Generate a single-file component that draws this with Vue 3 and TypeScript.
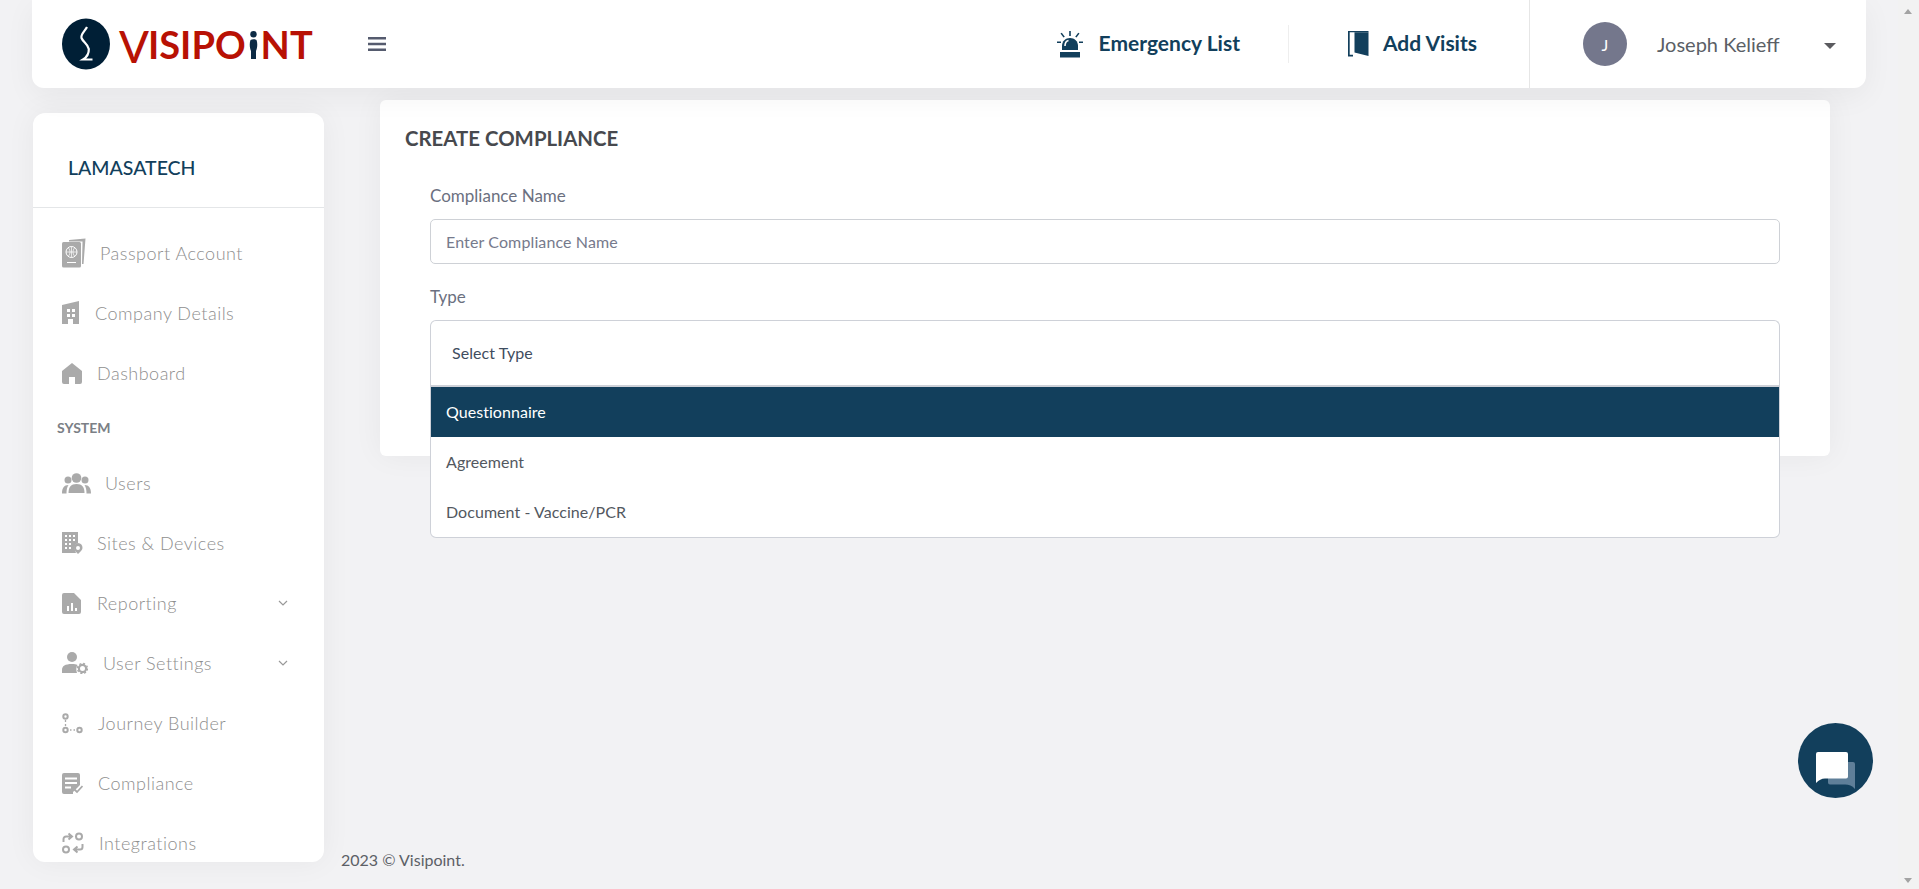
<script setup lang="ts">
interface NavItem { label: string; icon: string; w: number; chevron?: boolean; section?: boolean }
const items: NavItem[] = [
  { label: 'Passport Account', icon: 'passport', w: 38 },
  { label: 'Company Details', icon: 'company', w: 33 },
  { label: 'Dashboard', icon: 'home', w: 35 },
  { label: 'SYSTEM', icon: '', w: 0, section: true },
  { label: 'Users', icon: 'users', w: 43 },
  { label: 'Sites & Devices', icon: 'sites', w: 35 },
  { label: 'Reporting', icon: 'report', w: 35, chevron: true },
  { label: 'User Settings', icon: 'usercog', w: 41, chevron: true },
  { label: 'Journey Builder', icon: 'journey', w: 36 },
  { label: 'Compliance', icon: 'compliance', w: 36 },
  { label: 'Integrations', icon: 'integrations', w: 37 }
]
const options = ['Questionnaire', 'Agreement', 'Document - Vaccine/PCR']
</script>

<template>
  <div class="page">
    <div class="content">
      <header class="topbar">
        <div class="logo">
          <svg class="logo-mark" width="48" height="52" viewBox="0 0 48 52">
            <ellipse cx="24" cy="26" rx="24" ry="25.5" fill="#001f36" />
            <path d="M25 9 C23 13 18.500 16 19.500 20 C21 24 26 26 26.800 31 C27 35 25 39 21 41.500 L30.500 41.500" fill="none" stroke="#fff" stroke-width="2.200" />
          </svg>
          <span class="logo-text"><span class="logo-v">V</span>ISIPO<span class="logo-i"><svg width="9" height="29" viewBox="0 0 9 29"><circle cx="4.500" cy="3.200" r="3.200" fill="#0c2a44" /><path d="M1.500 9 C3 8 6 8 7.500 9 C9 13 8 18 7 20 L7 28 L2 28 L2 20 C1 18 0 13 1.500 9 Z" fill="#0c2a44" /></svg></span>NT</span>
        </div>
        <svg class="burger" width="18" height="16" viewBox="0 0 18 16"><path d="M0 1h18v2.600H0zM0 6.700h18v2.600H0zM0 12.400h18V15H0z" fill="#555b6e" /></svg>
        <div class="top-actions">
          <a class="action emergency">
            <svg width="26" height="27" viewBox="0 0 26 27" fill="#123f5c">
              <path d="M5 19 V15 C5 10 8.500 7 13 7 C17.500 7 21 10 21 15 V19 Z" />
              <rect x="3" y="21" width="20" height="5.500" />
              <path d="M12.200 0h1.600v5h-1.600zM3.500 2.600l1.300-.9 3 4-1.300.9zM22.500 2.600l-1.300-.9-3 4 1.300.9zM0 10.500h4v1.500H0zM22 10.500h4v1.500h-4z" />
              <path d="M11.500 9.500 C9.500 10 8 12 8 15" stroke="#fff" stroke-width="1.600" fill="none" />
            </svg>
            <span>Emergency List</span>
          </a>
          <span class="vline"></span>
          <a class="action visits">
            <svg width="21" height="26" viewBox="0 0 21 26" fill="#123f5c">
              <path d="M0 0H20.500V1.200H1.700V23.800H5V25.500H0Z" />
              <path d="M6.500 1.200H20.500V25L6.500 21.500Z" />
            </svg>
            <span>Add Visits</span>
          </a>
        </div>
        <div class="user">
          <span class="avatar">J</span>
          <span class="user-name">Joseph Kelieff</span>
          <span class="caret"></span>
        </div>
      </header>

      <div class="body">
        <aside class="sidebar">
          <div class="org">LAMASATECH</div>
          <nav class="nav">
            <template v-for="item in items" :key="item.label">
              <div v-if="item.section" class="section">{{ item.label }}</div>
              <a v-else class="nav-item">
                <span class="nav-icon" :style="{ width: item.w + 'px' }">
                  <svg v-if="item.icon === 'passport'" width="24" height="30" viewBox="0 0 24 30" fill="#aaa">
                    <path d="M7 2 L23.500 0.500 L21.500 26 L20 26 L20.500 3.500 L7 3.500z" />
                    <rect x="0" y="4" width="19" height="25.500" rx="1.500" />
                    <circle cx="9.500" cy="14" r="5.500" fill="none" stroke="#fff" stroke-width="1" />
                    <path d="M4 14h11M9.500 8.500v11M6.500 10c2 2.500 2 5.500 0 8M12.500 10c-2 2.500-2 5.500 0 8" fill="none" stroke="#fff" stroke-width=".7" />
                    <rect x="5" y="24" width="9" height="1" fill="#fff" />
                  </svg>
                  <svg v-else-if="item.icon === 'company'" width="18" height="24" viewBox="0 0 18 24" fill="#aaa">
                    <path fill-rule="evenodd" d="M0 4 L17 0 V23 H11 V18 H6 V23 H0 Z M5 8h3v3H5z M10 8h3v3h-3z M5 13h3v3H5z M10 13h3v3h-3z" />
                  </svg>
                  <svg v-else-if="item.icon === 'home'" width="20" height="21" viewBox="0 0 20 21" fill="#aaa">
                    <path d="M10 0 L20 8 V19 A2 2 0 0 1 18 21 H13 V14 H7 V21 H2 A2 2 0 0 1 0 19 V8 Z" />
                  </svg>
                  <svg v-else-if="item.icon === 'users'" width="29" height="21" viewBox="0 0 29 21" fill="#aaa">
                    <circle cx="14.500" cy="5" r="4.800" /><circle cx="6" cy="7" r="3.500" /><circle cx="23" cy="7" r="3.500" />
                    <path d="M6.500 20 C6.500 14 9 11 14.500 11 C20 11 22.500 14 22.500 20 Z" />
                    <path d="M0 20.500 C0 15 2 12 6.500 12 C5 14 4.500 17 4.500 20.500Z M29 20.500 C29 15 27 12 22.500 12 C24 14 24.500 17 24.500 20.500Z" />
                  </svg>
                  <svg v-else-if="item.icon === 'sites'" width="21" height="22" viewBox="0 0 21 22" fill="#aaa">
                    <path fill-rule="evenodd" d="M0 0H16V11 C13 12 12 15 13 18 L14 21H0Z M3 3h2v2H3z M7 3h2v2H7z M11 3h2v2h-2z M3 7h2v2H3z M7 7h2v2H7z M11 7h2v2h-2z M3 11h2v2H3z M7 11h2v2H7z M3 15h2v2H3z M7 15h2v2H7z" />
                    <path fill-rule="evenodd" d="M16 11 A5 5 0 0 1 20.500 16 C20.500 18 18 20 16 22 C14 20 12 18 12 16 A4.500 4.500 0 0 1 16 11 Z M16 14 A2 2 0 1 0 16 18 A2 2 0 1 0 16 14 Z" />
                  </svg>
                  <svg v-else-if="item.icon === 'report'" width="19" height="21" viewBox="0 0 19 21" fill="#aaa">
                    <path fill-rule="evenodd" d="M2 0H12L19 7V19A2 2 0 0 1 17 21H2A2 2 0 0 1 0 19V2A2 2 0 0 1 2 0Z M5 13v5h2v-5z M9 10v8h2v-8z M13 15v3h2v-3z" />
                  </svg>
                  <svg v-else-if="item.icon === 'usercog'" width="26" height="22" viewBox="0 0 26 22" fill="#aaa">
                    <circle cx="10" cy="5" r="5" />
                    <path d="M0 21 V18 C0 14 3 12 10 12 C12.500 12 14 12.300 15.500 13 C14 15 14 18 15 21Z" />
                    <circle cx="20.500" cy="16.500" r="3.600" fill="none" stroke="#aaa" stroke-width="2.200" />
                    <circle cx="20.500" cy="16.500" r="5" fill="none" stroke="#aaa" stroke-width="1.400" stroke-dasharray="2 1.930" />
                  </svg>
                  <svg v-else-if="item.icon === 'journey'" width="21" height="21" viewBox="0 0 21 21" fill="none" stroke="#aaa" stroke-width="2">
                    <circle cx="3.500" cy="3.500" r="2.200" /><circle cx="3.500" cy="17" r="2.200" /><circle cx="17.500" cy="17" r="2.200" />
                    <path d="M3.500 7v2M3.500 11v2M8 17h1.500M11.500 17H13" stroke-width="1.300" />
                  </svg>
                  <svg v-else-if="item.icon === 'compliance'" width="21" height="21" viewBox="0 0 21 21" fill="#aaa">
                    <path fill-rule="evenodd" d="M2 0H16A2 2 0 0 1 18 2V12 L11 19 V21H2A2 2 0 0 1 0 19V2A2 2 0 0 1 2 0Z M3 4.500v2h12v-2z M3 9v2h12V9z M3 13.500v2h6v-2z" />
                    <path d="M12 16l3 3 5.500-6" fill="none" stroke="#aaa" stroke-width="1.800" />
                  </svg>
                  <svg v-else-if="item.icon === 'integrations'" width="22" height="22" viewBox="0 0 22 22" fill="none" stroke="#aaa" stroke-width="2">
                    <circle cx="17" cy="4.500" r="3" /><circle cx="4" cy="17.500" r="3" />
                    <path d="M1.500 10V7A2.500 2.500 0 0 1 4 4.500H9M6.500 1.500 10 4.500 6.500 7.500" />
                    <path d="M20.500 12V15A2.500 2.500 0 0 1 18 17.500H13M15.500 14.500 12 17.500 15.500 20.500" />
                  </svg>
                </span>
                <span class="nav-label">{{ item.label }}</span>
                <svg v-if="item.chevron" class="chev" width="10" height="6" viewBox="0 0 10 6"><path d="M1 1l4 4 4-4" fill="none" stroke="#999" stroke-width="1.200" /></svg>
              </a>
            </template>
          </nav>
        </aside>

        <main class="main">
          <section class="card">
            <h1 class="card-title">CREATE COMPLIANCE</h1>
            <div class="form">
              <label class="label">Compliance Name</label>
              <input class="input" type="text" placeholder="Enter Compliance Name" />
              <label class="label type-label">Type</label>
              <div class="select">
                <div class="select-head">Select Type</div>
                <ul class="menu">
                  <li v-for="(o, i) in options" :key="o" class="option" :class="{ active: i === 0 }">{{ o }}</li>
                </ul>
              </div>
            </div>
          </section>
          <footer class="footer">2023 © Visipoint.</footer>
        </main>
      </div>
    </div>

    <div class="scrollbar">
      <span class="arrow up"></span>
      <span class="arrow down"></span>
    </div>

    <button class="chat" type="button" aria-label="Chat">
      <svg width="39" height="37" viewBox="0 0 39 37">
        <path d="M12 10H37A2 2 0 0 1 39 12V37 C36 33.500 33 32.500 29 32.500H14A2 2 0 0 1 12 30.500Z" fill="#5f7f99" />
        <path d="M2 0H30A2 2 0 0 1 32 2V24.500A2 2 0 0 1 30 26.500H9C5.500 26.500 3 28 0 31V2A2 2 0 0 1 2 0Z" fill="#fff" />
      </svg>
    </button>
  </div>
</template>

<style>
html, body { margin: 0; height: 100%; overflow: hidden; background: #f2f2f4; }
</style>

<style scoped>
.page {
  display: flex;
  height: 889px;
  background: #f2f2f4;
  font-family: Lato, "Liberation Sans", sans-serif;
  position: relative;
  overflow: hidden;
}
.content { flex: 1; min-width: 0; display: flex; flex-direction: column; }
.topbar {
  height: 88px;
  margin: 0 32px 0 32px;
  background: #fff;
  border-radius: 0 0 12px 12px;
  display: flex;
  align-items: center;
  box-shadow: 0 8px 30px rgba(0, 0, 0, .05);
  position: relative;
  z-index: 2;
  flex: none;
}
.logo { display: flex; align-items: center; margin-left: 30px; width: 306px; }
.logo-mark { flex: none; margin-right: 9px; }
.logo-text {
  color: #b81104;
  font-size: 38px;
  font-weight: 700;
  line-height: 38px;
  letter-spacing: 0;
  display: inline-flex;
  align-items: flex-start;
  white-space: nowrap;
}
.logo-v { font-size: 44px; line-height: 44px; margin: -1px -1px -6px 0; font-weight: 500; }
.logo-i { display: inline-flex; margin: 6px 3px 0; }
.burger { flex: none; }
.top-actions { margin-left: auto; display: flex; align-items: center; height: 100%; }
.action {
  display: flex;
  align-items: center;
  color: #123f5c;
  font-weight: 700;
  font-size: 21px;
  line-height: 24px;
  white-space: nowrap;
}
.action span { position: relative; top: -1px; }
.emergency { gap: 16px; }
.visits { gap: 14px; margin-left: 59px; margin-right: 52px; }
.vline { width: 1px; height: 38px; background: #eee; margin-left: 48px; }
.user {
  width: 337px;
  height: 100%;
  border-left: 1px solid #e6e6e6;
  display: flex;
  align-items: center;
  padding-left: 53px;
  box-sizing: border-box;
  flex: none;
}
.avatar {
  width: 44px;
  height: 44px;
  border-radius: 50%;
  background: #74778c;
  color: #fff;
  font-size: 16px;
  display: flex;
  align-items: center;
  justify-content: center;
  flex: none;
}
.user-name { margin-left: 30px; font-size: 20px; color: #5b5f66; white-space: nowrap; }
.caret {
  margin-left: 45px;
  margin-top: 3px;
  width: 0;
  height: 0;
  border-left: 6px solid transparent;
  border-right: 6px solid transparent;
  border-top: 6.500px solid #5b5b5f;
}
.body { flex: 1; min-height: 0; display: flex; }
.sidebar {
  width: 291px;
  margin: 25px 0 27px 33px;
  background: #fff;
  border-radius: 12px;
  box-shadow: 0 0 30px rgba(0, 0, 0, .05);
  overflow: hidden;
  flex: none;
}
.org {
  height: 95px;
  box-sizing: border-box;
  border-bottom: 1px solid #e4e6e8;
  padding: 44px 0 0 35px;
  color: #123f5c;
  font-size: 19.500px;
  font-weight: 500;
  line-height: 22px;
}
.nav { padding-top: 15px; }
.nav-item {
  height: 60px;
  display: flex;
  align-items: center;
  padding-left: 29px;
  color: #aaa;
  position: relative;
}
.nav-icon { display: inline-flex; align-items: center; flex: none; }
.nav-label { font-size: 18px; font-weight: 300; letter-spacing: .5px; color: #8e8e8e; white-space: nowrap; }
.chev { position: absolute; right: 36px; top: 27px; }
.section {
  height: 50px;
  line-height: 50px;
  padding-left: 24px;
  font-size: 14px;
  font-weight: 700;
  color: #7b7f86;
}
.main { flex: 1; min-width: 0; display: flex; flex-direction: column; }
.card {
  margin: 12px 68px 0 56px;
  height: 356px;
  box-sizing: border-box;
  background: #fff;
  border-radius: 6px;
  box-shadow: 0 0 30px rgba(0, 0, 0, .05);
  padding: 26px 25px 0;
  flex: none;
}
.card-title {
  margin: 0;
  font-size: 20.400px;
  line-height: 24px;
  font-weight: 700;
  color: #47494e;
}
.form { padding: 0 25px; margin-top: 34px; }
.label {
  display: block;
  font-size: 17px;
  line-height: 24px;
  color: #6b7080;
  height: 24px;
}
.input {
  display: block;
  width: 100%;
  height: 45px;
  box-sizing: border-box;
  margin-top: 11px;
  border: 1px solid #ced1d6;
  border-radius: 5px;
  padding: 0 15px;
  background: #fff;
  font: 400 16px Lato, sans-serif;
  letter-spacing: .12px;
  color: #6b7080;
  outline: none;
}
.input::placeholder { color: #767a8c; opacity: 1; }
.type-label { margin-top: 21px; }
.select { position: relative; margin-top: 11px; height: 66px; }
.select-head {
  height: 66px;
  box-sizing: border-box;
  border: 1px solid #ced1d8;
  border-bottom: 0;
  border-radius: 6px 6px 0 0;
  padding: 23px 0 0 21px;
  font-size: 16px;
  letter-spacing: .08px;
  line-height: 18px;
  color: #3f4d60;
  background: #fff;
}
.menu {
  position: absolute;
  left: 0;
  right: 0;
  top: 65px;
  margin: 0;
  padding: 0;
  list-style: none;
  background: #fff;
  border: 1px solid #ced1d8;
  border-top: 2px solid #ced1d8;
  border-radius: 0 0 6px 6px;
  z-index: 3;
}
.option {
  height: 50px;
  line-height: 50px;
  padding-left: 15px;
  font-size: 16px;
  letter-spacing: .05px;
  color: #53585f;
}
.option.active { background: #123f5c; color: #fff; }
.footer {
  margin-top: auto;
  padding: 0 0 19px 17px;
  font-size: 16px;
  line-height: 20px;
  color: #5c6066;
}
.scrollbar {
  width: 21px;
  flex: none;
  background: #f2f2f2;
  position: relative;
}
.arrow {
  position: absolute;
  left: 6px;
  width: 0;
  height: 0;
  border-left: 4.500px solid transparent;
  border-right: 4.500px solid transparent;
}
.arrow.up { top: 9px; border-bottom: 5px solid #a3a3a3; }
.arrow.down { bottom: 6px; border-top: 5px solid #a3a3a3; }
.chat {
  position: absolute;
  left: 1798px;
  top: 723px;
  width: 75px;
  height: 75px;
  border-radius: 50%;
  border: 0;
  padding: 19px 0 0 18px;
  box-sizing: border-box;
  background: #123f5c;
  display: block;
  z-index: 5;
}
.chat svg { display: block; }
</style>
